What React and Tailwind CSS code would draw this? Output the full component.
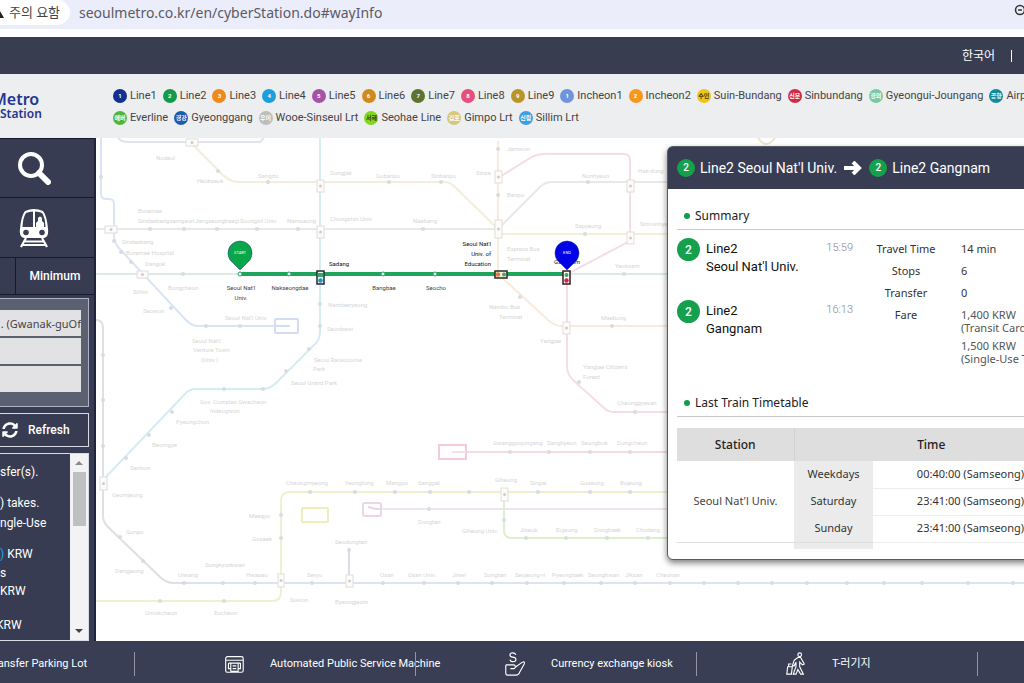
// ==============================
// Imports
// ==============================
import { useState } from "react";
import { FaSyncAlt } from "react-icons/fa";

// ==============================
// Data
// ==============================
const LINES_TOP = [
  { name: "Line1", mark: "1", color: "bg-[#12308f]" },
  { name: "Line2", mark: "2", color: "bg-[#159a4c]" },
  { name: "Line3", mark: "3", color: "bg-[#ee8a1c]" },
  { name: "Line4", mark: "4", color: "bg-[#1c9fdc]" },
  { name: "Line5", mark: "5", color: "bg-[#a553a8]" },
  { name: "Line6", mark: "6", color: "bg-[#cf8a1e]" },
  { name: "Line7", mark: "7", color: "bg-[#5d7430]" },
  { name: "Line8", mark: "8", color: "bg-[#e5507d]" },
  { name: "Line9", mark: "9", color: "bg-[#b8942a]" },
  { name: "Incheon1", mark: "1", color: "bg-[#6c95dd]" },
  { name: "Incheon2", mark: "2", color: "bg-[#f8961d]" },
  { name: "Suin-Bundang", mark: "수인", color: "bg-[#f0c514]", dark: true },
  { name: "Sinbundang", mark: "신분", color: "bg-[#cf2b46]" },
  { name: "Gyeongui-Joungang", mark: "경의", color: "bg-[#7cc8a3]" },
  { name: "Airport", mark: "공항", color: "bg-[#168a9c]" },
];

const LINES_BOTTOM = [
  { name: "Everline", mark: "에버", color: "bg-[#52b53a]" },
  { name: "Gyeonggang", mark: "경강", color: "bg-[#1a5cae]" },
  { name: "Wooe-Sinseul Lrt", mark: "우이", color: "bg-[#bdbdbd]" },
  { name: "Seohae Line", mark: "서해", color: "bg-[#80d81c]", dark: true },
  { name: "Gimpo Lrt", mark: "김포", color: "bg-[#d8c67c]" },
  { name: "Sillim Lrt", mark: "신림", color: "bg-[#3f9ee0]" },
];

const TIMETABLE = [
  { day: "Weekdays", time: "00:40:00 (Samseong)" },
  { day: "Saturday", time: "23:41:00 (Samseong)" },
  { day: "Sunday", time: "23:41:00 (Samseong)" },
];

// Lines that are not part of the route, drawn faded
const FADED_LINES = [
  { d: "M118 138Q122 142 128 142H260L264 138", color: "#e2e2ee" },
  { d: "M190 142L218 170Q228 182 238 182H444Q450 182 455 187L498 229", color: "#f3eedb" },
  { d: "M498 234H1024", color: "#f6efd8" },
  { d: "M96 229H498L540 187Q545 182 552 182H1024", color: "#e9e8e6" },
  { d: "M498 141V274L548 320Q555 326 562 326H1024", color: "#faeadb" },
  { d: "M498 178L530 158Q537 154 545 154H624Q630 154 630 160V241L567 274V366Q567 374 573 380L604 408Q608 412 614 412H1024", color: "#f6dde3" },
  { d: "M320 138V332Q320 340 314 345L276 383Q270 389 262 389H196Q189 389 185 394L103 480", color: "#d6ecf3" },
  { d: "M96 320Q103 320 103 328V516Q103 522 108 527L160 577Q166 583 174 583H190", color: "#dfdfe4" },
  { d: "M190 583H1024", color: "#dce3f2" },
  { d: "M101 138V194Q101 199 106 199H109Q114 199 114 204V236Q114 242 118 247L184 318Q191 326 198 326H275", color: "#d9e5f4" },
  { d: "M96 274H240M567 274H1024", color: "#dcece4" },
  { d: "M96 601H272Q281 601 281 592V500Q281 492 290 492H1024", color: "#f0f0cf" },
  { d: "M382 509H1024", color: "#f0e4f0" },
  { d: "M504 492V530Q504 538 512 538H1024", color: "#dcf0cc" },
  { d: "M466 452H1024", color: "#f6dce2" },
  { d: "M349 550V583", color: "#dcd9ec" },
];

const FADED_STOPS = [
  [101, 177], [218, 171], [268, 182], [389, 182], [441, 182], [588, 182], [150, 229], [184, 229],
  [217, 229], [257, 229], [298, 229], [423, 229], [114, 241], [121, 252], [131, 262], [183, 274],
  [171, 308], [206, 326], [240, 326], [320, 304], [320, 326], [309, 349], [286, 371], [263, 389],
  [224, 389], [172, 412], [149, 435], [126, 458], [103, 355], [103, 400], [103, 446], [120, 537],
  [143, 561], [184, 583], [223, 583], [255, 583], [312, 583], [349, 550], [383, 583], [424, 583],
  [458, 583], [492, 583], [527, 583], [564, 583], [601, 583], [635, 583], [670, 583], [704, 583],
  [738, 583], [772, 583], [807, 583], [847, 583], [884, 583], [922, 583], [968, 583], [1013, 583],
  [160, 601], [224, 601], [281, 515], [281, 538], [310, 492], [355, 492], [395, 492], [430, 492],
  [469, 492], [538, 492], [590, 492], [630, 492], [429, 509], [504, 520], [526, 538], [566, 538],
  [607, 538], [648, 538], [510, 452], [549, 452], [590, 452], [630, 452], [498, 149], [498, 195],
  [520, 297], [585, 234], [624, 274], [612, 326], [579, 382], [635, 412],
];

const FADED_TRANSFERS = [
  [317, 180, 7, 12], [317, 226, 7, 12], [105, 226, 12, 7], [137, 271, 11, 7], [495, 171, 7, 12],
  [495, 220, 7, 18], [627, 180, 7, 12], [627, 232, 7, 12], [563, 322, 7, 12], [100, 477, 7, 13],
  [278, 574, 6, 13], [346, 575, 7, 12], [501, 488, 7, 13], [186, 139, 12, 7],
];

const FADED_LABELS = [
  ["Nodeul", 156, 160], ["Heukseok", 197, 183], ["Dongjak", 330, 175], ["Gubanpo", 376, 178], ["Sinbanpo", 431, 178],
  ["Sangdo", 258, 178], ["Boramae", 138, 213], ["Sindaebangsamgeori", 138, 223], ["Jangseungbaegi", 195, 223],
  ["Soongsil Univ.", 240, 223], ["Namseong", 287, 223], ["Chongshin Univ.", 330, 221], ["Naebang", 413, 223],
  ["Sindaebang", 122, 244], ["Boramae Hospital", 126, 255], ["Dangok", 145, 266], ["Sillim", 133, 294],
  ["Bongcheon", 168, 290], ["Seowon", 143, 313], ["Seoul Nat'l Univ.", 225, 320], ["Seoul Nat'l", 192, 343],
  ["Venture Town", 193, 352], ["(Univ.)", 201, 362], ["Namtaeryeong", 328, 307], ["Seonbawi", 327, 331],
  ["Seoul Racecourse", 314, 362], ["Park", 313, 371], ["Seoul Grand Park", 291, 385], ["Gov. Complex Gwacheon", 200, 404],
  ["Indeogwon", 210, 413], ["Pyeongchon", 176, 424], ["Beomgye", 152, 447], ["Sanbon", 130, 470],
  ["Geumjeong", 112, 497], ["Gunpo", 126, 534], ["Dangjeong", 115, 573], ["Sungkyunkwan", 205, 567],
  ["Uiwang", 178, 577], ["Hwaseo", 246, 577], ["Suwon", 290, 602], ["Byeongjeom", 335, 604],
  ["Seodongtan", 335, 544], ["Seryu", 307, 577], ["Maegyo", 249, 518], ["Gosaek", 252, 541], ["Omokcheon", 145, 615],
  ["Eocheon", 214, 615], ["Cheongmyeong", 286, 485], ["Yeongtong", 345, 485], ["Mangpo", 386, 485],
  ["Sanggal", 418, 485], ["Giheung", 495, 482], ["Singal", 530, 485], ["Guseong", 580, 485], ["Bojeong", 620, 485],
  ["Dongtan", 418, 524], ["Giheung Univ.", 462, 533], ["Jiseok", 520, 532], ["Eojeong", 556, 532],
  ["Dongbaek", 594, 532], ["Chodang", 636, 532], ["Gwanggyojungang", 493, 445], ["Sanghyeon", 547, 445],
  ["Seongbok", 581, 445], ["Dongcheon", 617, 445], ["Osan", 380, 577], ["Osan Univ.", 408, 577], ["Jinwi", 452, 577],
  ["Songtan", 484, 577], ["Seojeong-ri", 515, 577], ["Pyeongtaek", 552, 577], ["Seonghwan", 588, 577],
  ["Jiksan", 625, 577], ["Cheonan", 656, 577], ["Jamwon", 507, 151], ["Sinsa", 476, 175], ["Banpo", 507, 197],
  ["Nonhyeon", 582, 178], ["Hak-dong", 638, 173], ["Sapyeong", 575, 228], ["Sinnonhyeon", 640, 226],
  ["Express Bus", 507, 251], ["Terminal", 507, 261], ["Yeoksam", 615, 268], ["Nambu Bus", 489, 309],
  ["Terminal", 499, 319], ["Yangjae", 540, 343], ["Maebong", 601, 320], ["Yangjae Citizen's", 583, 369],
  ["Forest", 583, 379], ["Cheonggyesan", 617, 405],
];

// ==============================
// Small Parts
// ==============================
function LineBadge({ className = "h-[18px] w-[18px] text-[10px]" }) {
  return (
    <span
      className={`flex shrink-0 items-center justify-center rounded-full bg-[#14a04c] font-['Roboto',sans-serif] font-medium text-white ${className}`}
    >
      2
    </span>
  );
}

function Legend({ lines }) {
  return (
    <ul className="flex gap-[6px]">
      {lines.map((line) => (
        <li key={line.name} className="flex shrink-0 items-center gap-[3px]">
          <span
            className={`flex h-[14px] w-[14px] items-center justify-center rounded-full text-[6px] font-bold ${line.color} ${
              line.dark ? "text-[#3d3a10]" : "text-white"
            }`}
          >
            {line.mark}
          </span>
          <span className="whitespace-nowrap">{line.name}</span>
        </li>
      ))}
    </ul>
  );
}

function SectionTitle({ children, className }) {
  return (
    <h3
      className={`flex items-center gap-[5px] border-b border-[#c9c9c9] pb-[3px] pl-[7px] text-xs leading-5 text-[#222] ${className}`}
    >
      <span className="h-[6px] w-[6px] rounded-full bg-[#159a4c]" />
      {children}
    </h3>
  );
}

function TrainIcon() {
  return (
    <svg viewBox="0 0 32 40" className="h-10 w-8" fill="none" aria-hidden="true">
      <path
        d="M7 3Q16 -1 25 3Q29 8 30 21Q31 29 26 30H6Q1 29 2 21Q3 8 7 3Z"
        fill="#fff"
      />
      <path d="M8 5Q11 3.500 15 3.500V19H4.500Q5 9 8 5Z" fill="#3a3f56" />
      <path d="M17 3.500Q21 3.500 24 5Q27 9 27.500 19H26V15L24 13V10Q22 7 20 10V13L18 15V19H17Z" fill="#3a3f56" />
      <circle cx="8" cy="24.500" r="2.800" fill="#3a3f56" />
      <circle cx="24" cy="24.500" r="2.800" fill="#3a3f56" />
      <path d="M8 30L3 39M24 30L29 39M7 33.500H25M5 37H27" stroke="#fff" strokeWidth="2.200" />
    </svg>
  );
}

function Pin({ x, color, label }) {
  return (
    <g>
      <path
        d={`M${x - 10} 260Q${x - 12} 257 ${x - 12} 253A12 12 0 0 1 ${x + 12} 253Q${x + 12} 257 ${x + 10} 260L${x} 270Z`}
        fill={color}
        stroke="#123a7a"
        strokeOpacity="0.5"
      />
      <text x={x} y="254" textAnchor="middle" fill="#fff" fontSize="4">
        {label}
      </text>
    </g>
  );
}

// ==============================
// Subway Map
// ==============================
function SubwayMap() {
  return (
    <svg
      viewBox="96 138 928 503"
      preserveAspectRatio="xMinYMin slice"
      className="h-full w-full font-['Roboto','Noto_Sans_CJK_KR',sans-serif]"
      role="img"
      aria-label="Subway map"
    >
      {/* -------- Faded network -------- */}
      {FADED_LINES.map((line) => (
        <path key={line.d} d={line.d} stroke={line.color} strokeWidth="2" fill="none" />
      ))}
      {FADED_STOPS.map(([x, y]) => (
        <circle key={`${x}-${y}`} cx={x} cy={y} r="2" fill="#d8dce2" />
      ))}
      {FADED_TRANSFERS.map(([x, y, w, h]) => (
        <g key={`${x}-${y}`}>
          <rect x={x} y={y} width={w} height={h} fill="#fdfcfa" stroke="#dfdddb" />
          <circle cx={x + w / 2} cy={y + h / 2} r="1.500" fill="#d0cbc8" />
        </g>
      ))}
      <g fill="#d6d6d6" fontSize="6">
        {FADED_LABELS.map(([name, x, y]) => (
          <text key={`${name}-${x}`} x={x} y={y}>
            {name}
          </text>
        ))}
      </g>
      <g fill="#fff" strokeWidth="2">
        <rect x="275" y="319" width="23" height="14" rx="1" stroke="#d3dcf3" />
        <path d="M276 326H290" stroke="#d3dcf3" />
        <rect x="302" y="508" width="26" height="14" rx="1" stroke="#eeeebb" />
        <rect x="363" y="503" width="18" height="13" rx="2" stroke="#ecd5e8" />
        <path d="M368 507L376 509H382" stroke="#ecd5e8" fill="none" />
        <rect x="439" y="445" width="27" height="14" stroke="#f5ccd6" />
        <path d="M452 452H466" stroke="#f8dfe5" />
      </g>
      <path d="M758 138Q766 150 775 138" stroke="#ede5cf" strokeWidth="2" fill="none" />

      {/* -------- Route -------- */}
      <path d="M240 274H567" stroke="#1ea45b" strokeWidth="4" />
      {[240, 289, 383, 435].map((x) => (
        <circle key={x} cx={x} cy="274" r="2" fill="#fff" stroke="#1ea45b" />
      ))}
      <rect x="317" y="271" width="7" height="13" fill="#e7f4ef" stroke="#1d2a38" strokeWidth="1.500" />
      <rect x="318" y="273" width="5" height="4" fill="#35a868" />
      <circle cx="320.500" cy="280.500" r="2.200" fill="#2a8fcb" />
      <rect x="495" y="271" width="12" height="7" fill="#f2eee4" stroke="#252a20" strokeWidth="1.500" />
      <circle cx="498" cy="274.500" r="2.200" fill="#df7c32" />
      <circle cx="504" cy="274.500" r="2" fill="#4ba465" />
      <text x="567" y="264" textAnchor="middle" fontSize="6" fill="#223">
        Gangnam
      </text>
      <rect x="563" y="271" width="7" height="13" fill="#fff" stroke="#3a1820" strokeWidth="1.500" />
      <circle cx="566.500" cy="275" r="2" fill="#3ba568" />
      <circle cx="566.500" cy="280.500" r="2.200" fill="#c82744" />
      <g fill="#111" fontSize="6">
        <text x="339" y="266" textAnchor="middle">Sadang</text>
        <g textAnchor="end">
          <text x="491" y="246">Seoul Nat'l</text>
          <text x="491" y="256">Univ. of</text>
          <text x="491" y="266">Education</text>
        </g>
        <g textAnchor="middle" fill="#444">
          <text x="241" y="290">Seoul Nat'l</text>
          <text x="241" y="300">Univ.</text>
          <text x="290" y="290">Nakseongdae</text>
          <text x="384" y="290">Bangbae</text>
          <text x="436" y="290">Seocho</text>
        </g>
      </g>
      <Pin x={240} color="#0ba54a" label="START" />
      <Pin x={567} color="#0202e6" label="END" />
    </svg>
  );
}

// ==============================
// Sidebar
// ==============================
function Sidebar() {
  const [stations, setStations] = useState([". (Gwanak-guOf", "", ""]);

  const updateStation = (index, value) => {
    setStations(stations.map((s, i) => (i === index ? value : s)));
  };

  return (
    <aside className="flex w-24 shrink-0 flex-col border-r-2 border-[#20253c] bg-[#373c52] font-['Roboto',sans-serif] text-white">
      <button aria-label="Search" className="h-[60px] shrink-0 border-y border-[#15192c] pl-[17px]">
        <svg viewBox="0 0 34 34" className="h-[34px] w-[34px]" fill="none" stroke="#fff" aria-hidden="true">
          <circle cx="14" cy="14" r="11" strokeWidth="4" />
          <path d="M22 22L31 31" strokeWidth="6" strokeLinecap="round" />
        </svg>
      </button>
      <button aria-label="Train information" className="h-[60px] shrink-0 border-b border-[#15192c] pl-[18px]">
        <TrainIcon />
      </button>
      <div className="flex h-[37px] shrink-0 border-b border-[#15192c] text-xs font-medium">
        <button aria-label="Shortest" className="w-4 border-r border-[#15192c]" />
        <button className="flex-1">Minimum</button>
      </div>

      {/* -------- Station inputs -------- */}
      <div className="mt-[3px] mr-[5px] flex flex-col gap-[2px] border border-l-0 border-[#aeb4c6] bg-[#5c6172] pt-[11px] pr-[7px] pb-[14px]">
        {stations.map((station, i) => (
          <input
            key={i}
            aria-label={`Station ${i + 1}`}
            value={station}
            onChange={(e) => updateStation(i, e.target.value)}
            className="h-[26px] w-full bg-[#e2e2e5] text-right font-['Noto_Sans',sans-serif] text-[11px] text-[#444]"
          />
        ))}
      </div>
      <button className="mt-[6px] mr-[5px] flex h-[34px] shrink-0 items-center gap-[10px] border border-l-0 border-[#d9dce6] pl-[2px] text-xs font-medium">
        <FaSyncAlt className="h-4 w-4" />
        Refresh
      </button>

      {/* -------- Route description -------- */}
      <div className="mt-[6px] mr-[5px] flex min-h-0 flex-1 border border-l-0 border-[#d9dce6] text-xs leading-5">
        <div className="flex-1 overflow-hidden pt-2 whitespace-nowrap">
          <p>sfer(s).</p>
          <p className="mt-[11px]">) takes.</p>
          <p>ngle-Use</p>
          <p className="mt-[11px]">
            <span className="text-[#2aa0f0]">)</span> KRW
          </p>
          <p className="leading-[18px]">s</p>
          <p className="leading-[18px]">KRW</p>
          <p className="mt-[15px] -ml-1">KRW</p>
        </div>
        <div className="flex w-[18px] flex-col items-center bg-[#f3f3f5] py-[7px]">
          <span className="border-x-[4px] border-b-[4px] border-x-transparent border-b-[#8a8a8a]" />
          <span className="mt-[7px] h-[54px] w-[13px] bg-[#bfc0c2]" />
          <span className="mt-auto border-x-[4px] border-t-[4px] border-x-transparent border-t-[#444]" />
        </div>
      </div>
    </aside>
  );
}

// ==============================
// Route Result Panel
// ==============================
function RoutePanel() {
  return (
    <section className="absolute top-2 -right-[54px] w-[411px] rounded-md border border-[#555b68] bg-white pb-[10px] font-['Noto_Sans',sans-serif] text-xs text-[#333] shadow-[0_3px_6px_rgba(0,0,0,0.5)]">
      <h2 className="flex h-[42px] items-center rounded-t-sm bg-[#383d54] pl-[9px] font-['Roboto',sans-serif] text-sm text-white">
        <LineBadge />
        <span className="ml-[5px]">Line2 Seoul Nat'l Univ.</span>
        <svg viewBox="0 0 18 14" className="mx-[7px] h-[14px] w-[18px]" fill="none" stroke="#fff" strokeWidth="4" aria-hidden="true">
          <path d="M0 7H15M9 1L15 7L9 13" />
        </svg>
        <LineBadge />
        <span className="ml-[5px]">Line2 Gangnam</span>
      </h2>

      <div className="px-[9px]">
        <SectionTitle className="pt-[17px]">Summary</SectionTitle>

        <div className="flex pt-[10px]">
          {/* Stations */}
          <ul className="flex w-[176px] flex-col gap-[26px] font-['Roboto',sans-serif] text-[13px] leading-[18px] text-[#111]">
            {[
              { station: "Seoul Nat'l Univ.", time: "15:59" },
              { station: "Gangnam", time: "16:13" },
            ].map((stop) => (
              <li key={stop.station} className="flex">
                <LineBadge className="-mt-[2px] h-[23px] w-[23px] text-xs" />
                <p className="ml-[6px] flex-1">
                  Line2
                  <br />
                  {stop.station}
                </p>
                <time className="text-[11px] leading-4 font-light text-[#888]">{stop.time}</time>
              </li>
            ))}
          </ul>

          {/* Travel details */}
          <dl className="-mt-[2px] ml-[18px] grid flex-1 grid-cols-[70px_1fr] gap-x-5 text-[11px] leading-[22px]">
            <dt className="text-center">Travel Time</dt>
            <dd>14 min</dd>
            <dt className="text-center">Stops</dt>
            <dd>6</dd>
            <dt className="text-center">Transfer</dt>
            <dd>0</dd>
            <dt className="text-center">Fare</dt>
            <dd className="pt-1 leading-[13px] whitespace-nowrap text-[#555]">
              <p>1,400 KRW</p>
              <p>(Transit Card)</p>
              <p className="mt-[5px]">1,500 KRW</p>
              <p>(Single-Use Ticket)</p>
            </dd>
          </dl>
        </div>

        <SectionTitle className="mt-7">Last Train Timetable</SectionTitle>

        <table className="mt-[11px] w-full table-fixed text-center">
          <colgroup>
            <col className="w-[117px]" />
            <col className="w-[79px]" />
            <col />
          </colgroup>
          <thead className="bg-[#dedede] text-xs text-[#222]">
            <tr className="h-[33px]">
              <th className="border-r border-[#d2d2d2] font-medium">Station</th>
              <th colSpan={2} className="font-medium">Time</th>
            </tr>
          </thead>
          <tbody className="text-[11px]">
            {TIMETABLE.map((row, i) => (
              <tr key={row.day} className="h-[27px]">
                {i === 0 && (
                  <td rowSpan={3} className="border-b border-[#ddd] text-[#444]">
                    Seoul Nat'l Univ.
                  </td>
                )}
                <td className={i === 2 ? "border-b border-[#ddd] bg-[#ebebeb]" : "bg-[#ebebeb]"}>{row.day}</td>
                <td className="border-b border-[#eee]">{row.time}</td>
              </tr>
            ))}
            <tr className="h-[7px]">
              <td />
              <td className="bg-[#ebebeb]" />
              <td />
            </tr>
          </tbody>
        </table>
      </div>
    </section>
  );
}

// ==============================
// Footer
// ==============================
const FOOTER_ITEMS = [
  {
    label: "Automated Public Service Machine",
    icon: (
      <>
        <rect x="3" y="4" width="19" height="17" rx="2" />
        <path d="M3 8H22M6 11H19M8.500 11V20M16.500 11V20H8.500M10.500 14H14.500M10.500 17H14.500M6 11V17H8.500M19 11V17H16.500" />
      </>
    ),
  },
  {
    label: "Currency exchange kiosk",
    icon: (
      <>
        <path d="M13 2Q12 0 9.500 0Q6.500 0 6.500 2.200Q6.500 4.200 9.500 4.600Q13 5 13 7.200Q13 9.500 10 9.500Q7 9.500 6.500 7.200" />
        <path d="M2 13H11L13 15L11 17H7M13 15L20 10Q23 9 22 12L17 21Q16 24 13 24H4Q2 24 2 22V13" />
      </>
    ),
  },
  {
    label: "T-러기지",
    icon: (
      <>
        <circle cx="16" cy="2" r="2" />
        <path d="M14 5L10 8L8 14L10 14L12 10L12 15L9 23H12L14 18L17 23H20L16 15V10L19 13L21 12L17 5Z" />
        <path d="M3 15H8L7 23H2ZM4 15V12H7" />
      </>
    ),
  },
];

function Footer() {
  return (
    <footer className="flex h-[42px] shrink-0 items-center overflow-hidden bg-[#393e54] pt-1 font-['Roboto','Noto_Sans_CJK_KR',sans-serif] text-[11px] whitespace-nowrap text-white">
      <a href="#parking" className="-ml-3 w-[146px] shrink-0">
        Transfer Parking Lot
      </a>
      {FOOTER_ITEMS.map((item) => (
        <a
          key={item.label}
          href="#service"
          className="flex h-6 w-[281px] shrink-0 items-center gap-6 border-l border-[#9296a4] pl-[87px]"
        >
          <svg viewBox="0 -1 24 26" className="h-6 w-6 shrink-0" fill="none" stroke="#fff" strokeWidth="1.200" aria-hidden="true">
            {item.icon}
          </svg>
          {item.label}
        </a>
      ))}
      <span className="h-6 border-l border-[#9296a4]" />
    </footer>
  );
}

// ==============================
// App
// ==============================
export default function App() {
  return (
    <div className="flex h-screen flex-col overflow-hidden bg-white font-['Roboto','Noto_Sans_CJK_KR',sans-serif]">
      {/* -------- Address bar -------- */}
      <div className="flex h-[29px] shrink-0 items-start justify-between overflow-hidden bg-[#ecedfa]">
        <div className="flex">
          <span className="flex h-[25px] w-[70px] items-center gap-[5px] rounded-r-full bg-white text-[13px] text-[#444]">
            <span className="mt-1 border-r-[4px] border-b-[7px] border-r-transparent border-b-[#222]" />
            주의 요함
          </span>
          <span className="ml-[9px] font-['Noto_Sans',sans-serif] text-sm leading-[25px] text-[#5a5a66]">
            seoulmetro.co.kr/en/cyberStation.do#wayInfo
          </span>
        </div>
        <svg viewBox="0 0 10 12" className="mt-1 h-3 w-[10px]" fill="none" stroke="#333" strokeWidth="1.500" aria-hidden="true">
          <circle cx="6" cy="6" r="4.500" />
          <path d="M4 6H8" />
        </svg>
      </div>

      {/* -------- Top bar -------- */}
      <div className="mt-2 flex h-[37px] shrink-0 items-center justify-end gap-4 bg-[#383e50] pr-3 text-xs text-white">
        <a href="#ko">한국어</a>
        <span className="h-3 border-l border-white" />
      </div>

      {/* -------- Logo & line legend -------- */}
      <header className="flex h-16 shrink-0 items-start overflow-hidden bg-[#edeeef] text-[11px] text-[#444]">
        <h1 className="mt-4 w-[113px] shrink-0 font-['Noto_Sans',sans-serif] font-semibold text-[#24358f]">
          <span className="-ml-2 block text-base leading-[18px]">Metro</span>
          <span className="block text-xs leading-3">Station</span>
        </h1>
        <nav aria-label="Lines" className="mt-[11px] flex flex-col gap-px leading-[21px]">
          <Legend lines={LINES_TOP} />
          <Legend lines={LINES_BOTTOM} />
        </nav>
      </header>

      {/* -------- Map area -------- */}
      <main className="relative flex min-h-0 flex-1 overflow-hidden">
        <Sidebar />
        <div className="min-w-0 flex-1">
          <SubwayMap />
        </div>
        <RoutePanel />
      </main>

      <Footer />
    </div>
  );
}
